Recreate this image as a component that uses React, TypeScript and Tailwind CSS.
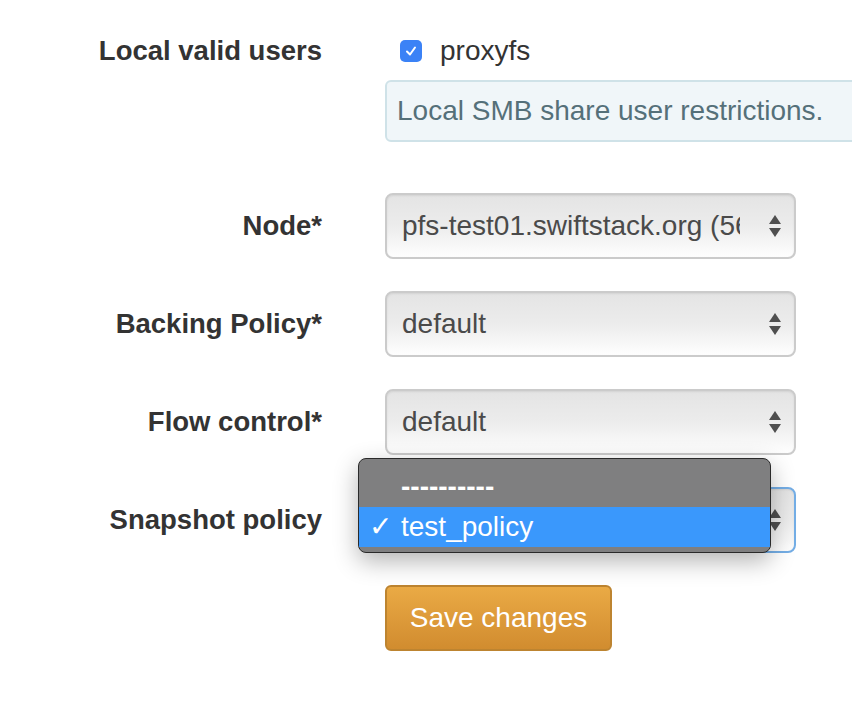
import React from "react";

const font = { fontFamily: '"Liberation Sans", Arial, sans-serif' };

const Arrows = () => (
  <svg width="14" height="24" viewBox="0 0 14 24" className="shrink-0">
    <path d="M7 1 L13 10 H1 Z" fill="#4f4f4f" />
    <path d="M7 23 L13 14 H1 Z" fill="#4f4f4f" />
  </svg>
);

const Select = ({ value, focused }: { value: string; focused?: boolean }) => (
  <div
    className={
      "flex h-[66px] w-[411px] items-center justify-between overflow-hidden rounded-[8px] border-2 bg-gradient-to-b from-[#e4e4e4] via-[#ececec] to-[#fefefe] pl-[15px] pr-[12px] shadow-[inset_0_1px_2px_rgba(0,0,0,0.08)] " +
      (focused ? "border-[#74aee6]" : "border-[#cbcbcb]")
    }
  >
    <span className="w-[338px] overflow-hidden whitespace-nowrap text-[28px] text-[#4a4a4a]">
      {value}
    </span>
    <Arrows />
  </div>
);

const Row = ({ label, children }: { label: string; children: React.ReactNode }) => (
  <div className="flex items-center">
    <div className="w-[322px] shrink-0 text-right text-[27.5px] font-bold text-[#333333]">{label}</div>
    <div className="ml-[63px] shrink-0">{children}</div>
  </div>
);

export default function App() {
  return (
    <div className="relative min-h-[706px] w-full overflow-hidden bg-white" style={font}>
      <div className="flex flex-col pt-[35px]">
        <div className="flex">
          <div className="w-[322px] shrink-0 text-right text-[27.5px] font-bold leading-[32px] text-[#333333]">
            Local valid users
          </div>
          <div className="ml-[63px] flex shrink-0 flex-col">
            <div className="flex h-[32px] items-center pl-[15px]">
              <div className="flex h-[22px] w-[22px] items-center justify-center rounded-[5px] bg-[#3b82f6]">
                <svg width="14" height="14" viewBox="0 0 14 14">
                  <path d="M3 7.5 L6 10.5 L11 3.5" fill="none" stroke="white" strokeWidth="2" strokeLinecap="round" strokeLinejoin="round" />
                </svg>
              </div>
              <span className="ml-[18px] text-[28px] text-[#333333]">proxyfs</span>
            </div>
            <div className="mt-[13px] flex h-[62px] w-[520px] items-center rounded-[6px] border-2 border-[#cfe2e8] bg-[#f0f6f9] pl-[10px] text-[28px] text-[#557079]">
              Local SMB share user restrictions.
            </div>
          </div>
        </div>

        <div className="mt-[51px] flex flex-col gap-[32px]">
          <Row label="Node*">
            <Select value="pfs-test01.swiftstack.org (56" />
          </Row>
          <Row label="Backing Policy*">
            <Select value="default" />
          </Row>
          <Row label="Flow control*">
            <Select value="default" />
          </Row>
          <Row label="Snapshot policy">
            <div className="relative">
              <Select value="test_policy" focused />
              <div className="absolute left-[-27px] top-[-29px] h-[95px] w-[413px] rounded-[8px] border border-[#2a2a2a] bg-[#7f7f80] pt-[7px] shadow-[0_8px_24px_rgba(0,0,0,0.3)]">
                <div className="flex h-[41px] items-center pl-[42px] text-[28px] font-bold text-white">
                  ----------
                </div>
                <div className="flex h-[40px] items-center bg-[#3a98fc] text-[28px] text-white">
                  <span className="w-[42px] pl-[10px] text-[28px] font-bold" style={{ fontFamily: '"DejaVu Sans", sans-serif' }}>✓</span>
                  <span>test_policy</span>
                </div>
              </div>
            </div>
          </Row>
          <Row label="">
            <button className="h-[66px] w-[227px] rounded-[6px] border-2 border-[#bd8430] bg-gradient-to-b from-[#eaaa45] to-[#d18c2f] text-[28px] text-white">
              Save changes
            </button>
          </Row>
        </div>
      </div>
    </div>
  );
}
